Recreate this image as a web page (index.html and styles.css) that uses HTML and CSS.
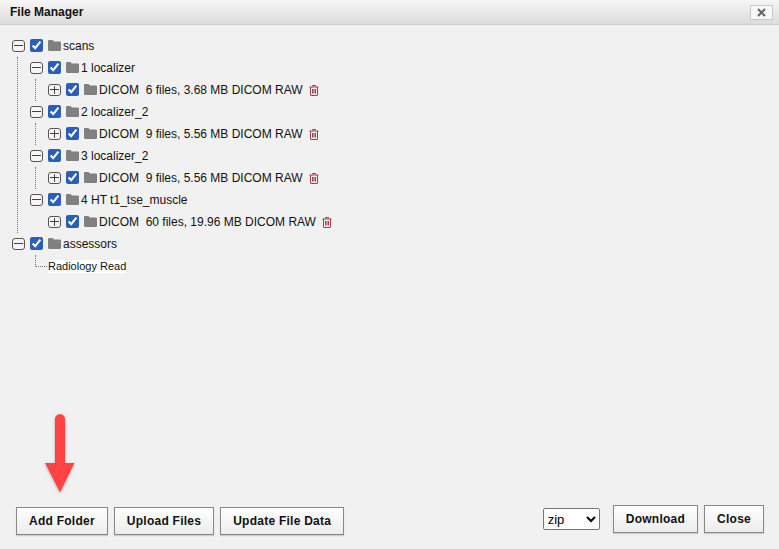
FILE: index.html
```html
<!DOCTYPE html>
<html lang="en">
<head>
  <meta charset="UTF-8">
  <title>File Manager</title>
  <link rel="stylesheet" href="styles.css">
</head>
<body>
  <svg class="sprites" width="0" height="0">
    <symbol id="folder" viewBox="0 0 13 11">
      <path d="M0 1.2C0 .5.5 0 1.2 0h3c.5 0 .8.2 1 .6l.5.9h6c.7 0 1.3.5 1.3 1.2v7c0 .7-.6 1.3-1.3 1.300H1.2C.5 11 0 10.5 0 9.8z" fill="#808080"/>
    </symbol>
    <symbol id="trash" viewBox="0 0 10 11">
      <path d="M3.500 1.500V.5h3v1M.5 2h9M1.500 2v8c0 .3.2.5.5.5h6c.3 0 .5-.2.5-.5V2M3.500 4v4.500M5 4v4.500M6.500 4v4.500" fill="none" stroke="#a5384a" stroke-width="1"/>
    </symbol>
  </svg>

  <div class="dialog">
    <header class="title-bar">
      <h1>File Manager</h1>
      <button class="x-btn" aria-label="Close">
        <svg width="9" height="9" viewBox="0 0 9 9"><path d="M1 1l7 7M8 1L1 8" stroke="#666" stroke-width="2"/></svg>
      </button>
    </header>

    <main class="tree">
      <div class="row">
        <span class="toggle minus"></span><input type="checkbox" checked>
        <svg class="folder"><use href="#folder"/></svg><span>scans</span>
      </div>
      <ul class="branch">
        <li>
          <div class="row"><span class="toggle minus"></span><input type="checkbox" checked><svg class="folder"><use href="#folder"/></svg><span>1 localizer</span></div>
          <ul class="branch">
            <li><div class="row"><span class="toggle plus"></span><input type="checkbox" checked><svg class="folder"><use href="#folder"/></svg><span class="file">DICOM  6 files, 3.68 MB DICOM RAW</span><svg class="trash"><use href="#trash"/></svg></div></li>
          </ul>
        </li>
        <li>
          <div class="row"><span class="toggle minus"></span><input type="checkbox" checked><svg class="folder"><use href="#folder"/></svg><span>2 localizer_2</span></div>
          <ul class="branch">
            <li><div class="row"><span class="toggle plus"></span><input type="checkbox" checked><svg class="folder"><use href="#folder"/></svg><span class="file">DICOM  9 files, 5.56 MB DICOM RAW</span><svg class="trash"><use href="#trash"/></svg></div></li>
          </ul>
        </li>
        <li>
          <div class="row"><span class="toggle minus"></span><input type="checkbox" checked><svg class="folder"><use href="#folder"/></svg><span>3 localizer_2</span></div>
          <ul class="branch">
            <li><div class="row"><span class="toggle plus"></span><input type="checkbox" checked><svg class="folder"><use href="#folder"/></svg><span class="file">DICOM  9 files, 5.56 MB DICOM RAW</span><svg class="trash"><use href="#trash"/></svg></div></li>
          </ul>
        </li>
        <li>
          <div class="row"><span class="toggle minus"></span><input type="checkbox" checked><svg class="folder"><use href="#folder"/></svg><span>4 HT t1_tse_muscle</span></div>
          <ul class="branch last">
            <li><div class="row"><span class="toggle plus"></span><input type="checkbox" checked><svg class="folder"><use href="#folder"/></svg><span class="file">DICOM  60 files, 19.96 MB DICOM RAW</span><svg class="trash"><use href="#trash"/></svg></div></li>
          </ul>
        </li>
      </ul>
      <div class="row">
        <span class="toggle minus"></span><input type="checkbox" checked>
        <svg class="folder"><use href="#folder"/></svg><span>assessors</span>
      </div>
      <div class="leaf"><span class="elbow"></span><span class="leaf-label">Radiology Read</span></div>
    </main>

    <footer class="actions">
      <div class="group low">
        <button class="btn">Add Folder</button>
        <button class="btn">Upload Files</button>
        <button class="btn">Update File Data</button>
      </div>
      <div class="group">
        <select class="format"><option>zip</option><option>tar</option></select>
        <button class="btn">Download</button>
        <button class="btn">Close</button>
      </div>
    </footer>

    <svg class="arrow" width="40" height="90" viewBox="0 0 40 90">
      <defs>
        <filter id="soft" x="-30%" y="-10%" width="160%" height="125%">
          <feDropShadow dx="0" dy="1" stdDeviation="1.500" flood-color="#000" flood-opacity=".3"/>
        </filter>
      </defs>
      <path d="M15 10c0-6.500 10-6.500 10 0v44h9.500L20 83.500 5 54h10z" fill="#ff4343" filter="url(#soft)"/>
    </svg>
  </div>
</body>
</html>
```

FILE: styles.css
```css
html, body {
  margin: 0;
  padding: 0;
  height: 100%;
}
body {
  font-family: "Liberation Sans", Arial, sans-serif;
  font-size: 12px;
  color: #111;
  background-color: #f1f1f1;
  overflow: hidden;
}
.sprites {
  display: block;
}
.dialog {
  position: relative;
  height: 549px;
  display: flex;
  flex-direction: column;
}

/* Title bar */
.title-bar {
  height: 24px;
  flex: none;
  display: flex;
  align-items: center;
  justify-content: space-between;
  padding: 0 6px 0 10px;
  background: linear-gradient(#f6f6f6, #dcdcdc);
  border-bottom: 1px solid #cfcfcf;
}
.title-bar h1 {
  margin: 0;
  font-size: 12px;
  font-weight: bold;
}
.x-btn {
  width: 23px;
  height: 15px;
  padding: 0;
  display: flex;
  align-items: center;
  justify-content: center;
  background-color: #f7f7f7;
  border: 1px solid #c8c8c8;
}

/* Tree */
.tree {
  flex: 1;
  padding: 10px 0 0 12px;
}
.row {
  height: 22px;
  display: flex;
  align-items: center;
  white-space: pre;
}
.row input {
  width: 13px;
  height: 13px;
  margin: -1px 5px 0 5px;
  accent-color: #2b5eb8;
}
.toggle {
  position: relative;
  width: 13px;
  height: 12px;
  margin-top: -1px;
  flex: none;
  box-sizing: border-box;
  background-color: #f6f6f6;
  border: 1px solid #5c5058;
  border-radius: 3px;
}
.toggle::before {
  content: "";
  position: absolute;
  left: 1px;
  right: 1px;
  top: 4px;
  height: 1px;
  background-color: #444;
}
.toggle.plus::after {
  content: "";
  position: absolute;
  top: 1px;
  bottom: 1px;
  left: 5px;
  width: 1px;
  background-color: #444;
}
.folder {
  width: 13px;
  height: 11px;
  margin: -2px 2px 0 0;
  flex: none;
}
.trash {
  width: 10px;
  height: 11px;
  margin-left: 6px;
  flex: none;
}
.branch {
  list-style: none;
  margin: 0 0 0 5px;
  padding: 0 0 0 12px;
  border-left: 1px dotted #777;
}
.branch.last {
  border-left-color: transparent;
}
.leaf {
  height: 23px;
  display: flex;
  align-items: center;
  margin-left: 23px;
}
.elbow {
  width: 11px;
  height: 11px;
  margin-top: -11px;
  flex: none;
  border-left: 1px dotted #777;
  border-bottom: 1px dotted #777;
}
.leaf-label {
  font-size: 11px;
  line-height: 13px;
  margin-left: 1px;
  background-color: #fff;
}

/* Footer buttons */
.actions {
  flex: none;
  height: 44px;
  display: flex;
  justify-content: space-between;
  padding: 0 15px 0 16px;
}
.group {
  display: flex;
  align-items: flex-start;
  gap: 6px;
}
.group.low {
  padding-top: 2px;
}
.btn {
  height: 28px;
  padding: 0 12px;
  font-family: inherit;
  font-size: 12px;
  font-weight: bold;
  letter-spacing: .25px;
  color: #111;
  background: linear-gradient(#fff, #ececec);
  border: 1px solid #888;
  box-shadow: 0 1px 1px rgba(0, 0, 0, .15);
}
.format {
  width: 57px;
  height: 22px;
  margin: 3px 7px 0 0;
  font-family: inherit;
  font-size: 13px;
  background-color: #fff;
  border: 1px solid #777;
  border-radius: 2px;
}

/* Annotation on top of the screenshot */
.arrow {
  position: absolute;
  left: 40px;
  top: 409px;
}
```
